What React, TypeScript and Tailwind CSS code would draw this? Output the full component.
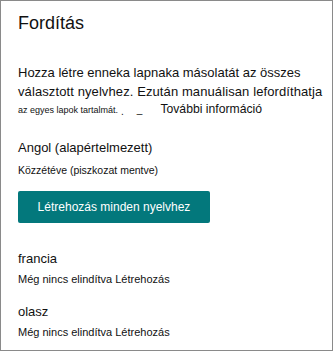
import React from "react";

export default function App() {
  return (
    <div
      className="w-[333px] h-[351px] border border-[#8a8a8a] bg-white text-[#111] box-border overflow-hidden"
      style={{ fontFamily: '"Liberation Sans", Arial, sans-serif' }}
    >
      <div className="pl-[17px] pt-[10px]">
        <h1 className="text-[18px] leading-[24px] font-normal">Fordítás</h1>

        <div className="mt-[28px] text-[13px]">
          <div className="leading-[19px]">Hozza létre enneka lapnaka másolatát az összes</div>
          <div className="leading-[19px] tracking-[0.1px]">választott nyelvhez. Ezután manuálisan lefordíthatja</div>
          <div className="leading-[17px] flex items-baseline whitespace-nowrap">
            <span className="text-[9px]">az egyes lapok tartalmát.</span>
            <span className="ml-[3px] text-[10px] relative top-[2px]">.</span>
            <span className="ml-[13px] text-[10px]">_</span>
            <span className="ml-[18px] text-[12.2px]">További információ</span>
          </div>
        </div>

        <div className="mt-[19px] text-[13px] leading-[20px]">Angol (alapértelmezett)</div>
        <div className="mt-[3px] text-[10.5px] leading-[18px]">Közzétéve (piszkozat mentve)</div>

        <button className="mt-[12px] w-[192px] h-[32px] rounded-[2px] bg-[#03787c] text-white text-[12px] flex items-center justify-center">
          Létrehozás minden nyelvhez
        </button>

        <div className="mt-[26px] text-[13px] leading-[20px]">francia</div>
        <div className="text-[11px] leading-[20px]">Még nincs elindítva Létrehozás</div>

        <div className="mt-[13px] text-[13px] leading-[20px]">olasz</div>
        <div className="text-[11px] leading-[20px]">Még nincs elindítva Létrehozás</div>
      </div>
    </div>
  );
}
